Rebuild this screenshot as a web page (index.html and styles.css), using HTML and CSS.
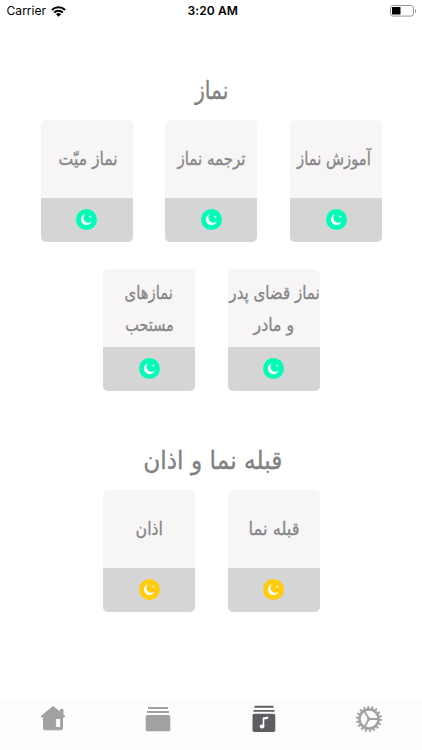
FILE: index.html
```html
<!DOCTYPE html>
<html lang="fa" dir="rtl">
<head>
<meta charset="utf-8">
<title>نماز</title>
<link rel="stylesheet" href="styles.css">
</head>
<body>
<svg class="defs" aria-hidden="true">
  <symbol id="moon" viewBox="0 0 20 20">
    <circle cx="10" cy="10" r="10" fill="currentColor"/>
    <path d="M8.600 4.900A5.300 5.300 0 1 0 15 11.800 4.600 4.600 0 0 1 8.600 4.900Z" fill="#fff"/>
    <path d="M13.500 5.500l.5 1.300 1.300.5-1.300.5-.5 1.300-.5-1.300-1.300-.5 1.300-.5z" fill="#fff" opacity=".8"/>
  </symbol>
</svg>
<div class="screen">
  <header class="status" dir="ltr">
    <div class="carrier">Carrier
      <svg width="15" height="11" viewBox="0 0 15 11"><g fill="none" stroke="#000" stroke-width="2.1"><path d="M.9 4a9.300 9.300 0 0 1 13.200 0"/><path d="M3.200 6.600a6 6 0 0 1 8.600 0"/></g><path d="M5 8.300a3.500 3.500 0 0 1 5 0L7.500 10.800z"/></svg>
    </div>
    <div class="time">3:20 AM</div>
    <svg class="battery" width="27" height="12" viewBox="0 0 27 12"><rect x=".5" y=".5" width="23" height="10.6" rx="2.5" fill="#fff" stroke="#999"/><rect x="2" y="2" width="8.5" height="7.6" rx=".6"/><path d="M25 4v4c1.6-.6 1.6-3.4 0-4z" fill="#999"/></svg>
  </header>
  <main>
    <section class="group">
      <h1><span class="t-prayer">نماز</span></h1>
      <div class="row">
        <article class="card"><p><span class="l-learn">آموزش نماز</span></p><footer><svg class="moon"><use href="#moon"/></svg></footer></article>
        <article class="card"><p><span class="l-trans">ترجمه نماز</span></p><footer><svg class="moon"><use href="#moon"/></svg></footer></article>
        <article class="card"><p><span class="l-mayyit">نماز میّت</span></p><footer><svg class="moon"><use href="#moon"/></svg></footer></article>
      </div>
      <div class="row">
        <article class="card"><p><span class="l-qaza">نماز قضای پدر</span><span class="l-madar">و مادر</span></p><footer><svg class="moon"><use href="#moon"/></svg></footer></article>
        <article class="card"><p><span class="l-haye">نمازهای</span><span class="l-must">مستحب</span></p><footer><svg class="moon"><use href="#moon"/></svg></footer></article>
      </div>
    </section>
    <section class="group gold">
      <h1><span class="t-qibla">قبله نما و اذان</span></h1>
      <div class="row">
        <article class="card"><p><span class="l-qibla">قبله نما</span></p><footer><svg class="moon"><use href="#moon"/></svg></footer></article>
        <article class="card"><p><span class="l-azan">اذان</span></p><footer><svg class="moon"><use href="#moon"/></svg></footer></article>
      </div>
    </section>
  </main>
  <nav class="tabs" dir="ltr">
    <a><svg width="26" height="28" viewBox="0 0 26 28"><path fill-rule="evenodd" stroke="currentColor" stroke-width="1" stroke-linejoin="round" d="M13 2.500L1.500 12v1H3.500V24.500q0 1.300 1.300 1.300H21q1.500 0 1.500-1.500V13h2v-1l-1.500-1.500V5.500H20.500V8.200ZM15.700 14.500h5v9h-5z"/></svg></a>
    <a><svg width="26" height="28" viewBox="0 0 26 28"><path d="M3 3h20v2H3zM2 7.100h22v1.900H2z"/><rect x=".7" y="11" width="24.600" height="16.300" rx="1.800"/></svg></a>
    <a class="active"><svg width="26" height="28" viewBox="0 0 26 28"><path d="M3.500 1.800h19v2h-19zM2.500 6h21v1.800h-21z"/><rect x="1.500" y="9.800" width="22.800" height="18.200" rx="1.800"/><path d="M11.700 22.500v-9l5.500-1v2.200l-3.900.8v7.300" fill="#fff"/><ellipse cx="11" cy="22.500" rx="2.300" ry="2" fill="#fff"/></svg></a>
    <a><svg width="27" height="28" viewBox="0 0 27 28"><g fill="none" stroke="currentColor"><circle cx="13" cy="15" r="11.900" stroke-width="2.200" stroke-dasharray="2 2.154"/><circle cx="13" cy="15" r="9.600" stroke-width="2.600"/><path stroke-width="1.800" d="M13 15h9M13 15L8.500 7.200M13 15L8.500 22.800"/></g><circle cx="13" cy="15" r="1.800"/></svg></a>
  </nav>
</div>
</body>
</html>
```

FILE: styles.css
```css
* { box-sizing: border-box; }
body { margin: 0; background: #fff; }
.defs { display: none; }
.screen { width: 422px; height: 750px; display: flex; flex-direction: column; overflow: hidden; font-family: "DejaVu Sans", sans-serif; }
.status { height: 22px; padding: 0 5px 0 6.5px; display: grid; grid-template-columns: 1fr auto 1fr; align-items: center; font: 12.1px/22px Inter, sans-serif; color: #000; }
.carrier { display: flex; align-items: center; gap: 5px; }
.time { font-weight: 600; letter-spacing: .05px; margin-left: 2px; }
.battery { justify-self: end; }
main { flex: 1; padding-left: .8px; }
.group { color: #00fdb8; }
.group.gold { color: #ffcc0c; }
h1 { margin: 0; height: 97.6px; padding-top: 47px; font-size: 24px; line-height: 44px; font-weight: 400; color: #818181; text-align: center; }
.gold h1 { height: 99px; padding-top: 48px; }
h1 span, .card span { display: inline-block; white-space: nowrap; -webkit-text-stroke: .3px currentColor; }
.row { display: flex; justify-content: center; gap: 32.7px; }
.row + .row { margin-top: 27.4px; }
.card { flex: none; width: 92px; height: 122px; border-radius: 5px; overflow: hidden; background: #f7f5f6; display: flex; flex-direction: column; }
.card p { margin: 0; height: 78px; padding-top: 2px; display: flex; flex-direction: column; align-items: center; justify-content: center; font-size: 17px; line-height: 31px; color: #868686; }
.card footer { flex: 1; background: #d5d5d5; display: flex; align-items: center; justify-content: center; }
.moon { width: 21px; height: 21px; }

/* Condensed, slightly tall lettering */
.t-prayer { transform: scale(.85, 1.06); }
.t-qibla { transform: translateX(1px) scale(.97, 1.06); }
.l-learn { transform: translateX(-2.5px) scale(.87, 1.06); }
.l-trans { transform: scale(.885, 1.06); }
.l-mayyit { transform: translateX(1px) scale(.92, 1.06); }
.l-qaza { transform: translateX(.5px) scale(.885, 1.06); }
.l-madar { transform: translateY(1px) scale(.93, 1.06); }
.l-haye { transform: scale(.87, 1.06); }
.l-must { transform: translateY(1px) scale(.85, 1.06); }
.l-qibla { transform: translateX(.5px) scale(.96, 1.06); }
.l-azan { transform: translateX(.5px) scale(.93, 1.06); }

.tabs { height: 50px; background: #fdfdfd; display: flex; justify-content: center; color: #a1a1a1; }
.tabs a { width: 105.5px; padding-top: 4px; display: flex; justify-content: center; }
.tabs svg { fill: currentColor; }
.tabs .active { color: #5e5d62; }
```
